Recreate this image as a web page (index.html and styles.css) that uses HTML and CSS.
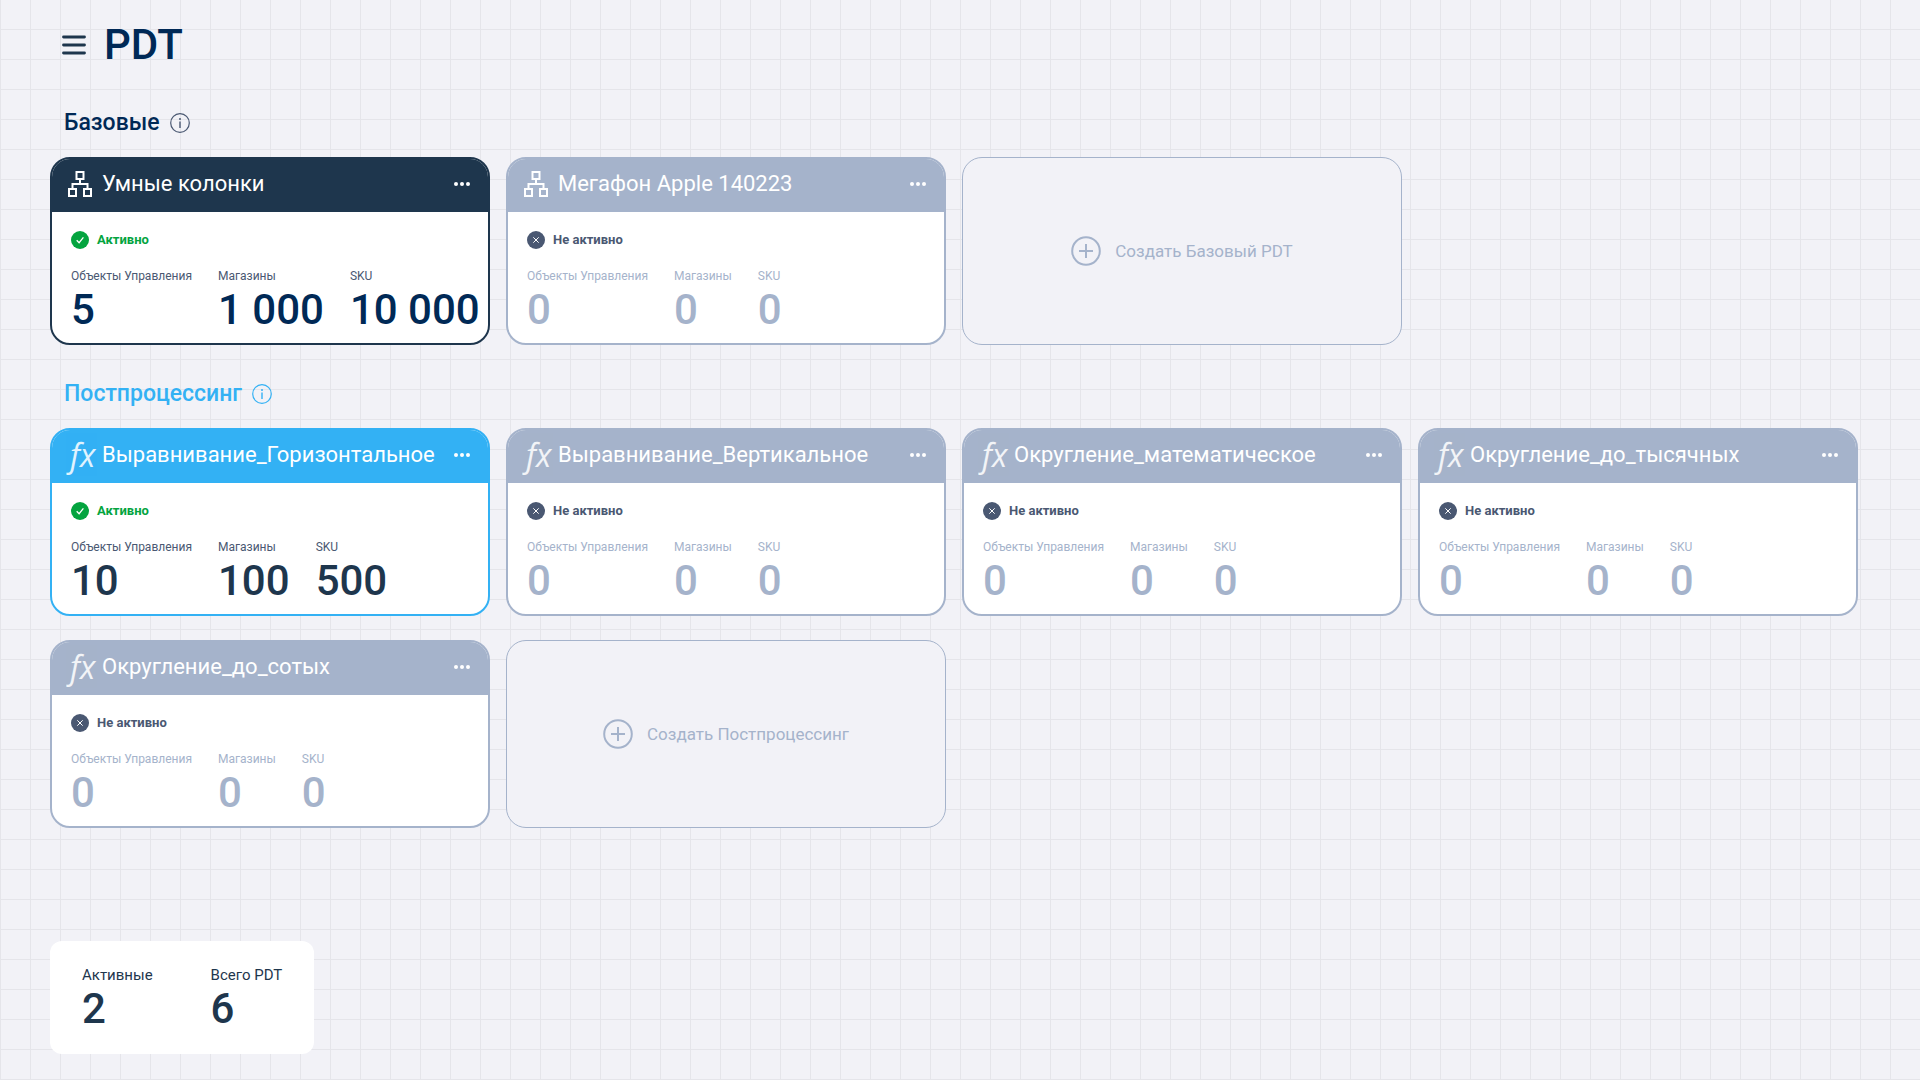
FILE: index.html
```html
<!DOCTYPE html>
<html lang="ru">
<head>
  <meta charset="UTF-8">
  <meta name="viewport" content="width=device-width, initial-scale=1.0">
  <title>PDT</title>
  <link rel="stylesheet" href="styles.css">
</head>
<body>

  <!-- Набор иконок -->
  <svg class="sprite" xmlns="http://www.w3.org/2000/svg" aria-hidden="true">
    <symbol id="icon-info" viewBox="0 0 20 20">
      <circle cx="10" cy="10" r="9.3" fill="none" stroke="currentColor" stroke-width="1.2"/>
      <circle cx="10" cy="6" r="1" fill="currentColor"/>
      <path d="M10 8.6v6.4" stroke="currentColor" stroke-width="1.4"/>
    </symbol>
    <symbol id="icon-tree" viewBox="0 0 25 26">
      <path d="M8.5 1h7v7h-7zM1 18h7v7H1zM16 18h7v7h-7zM12 8v5M4.500 18v-5h15v5" fill="none" stroke="currentColor" stroke-width="2"/>
    </symbol>
    <symbol id="icon-dots" viewBox="0 0 16 4">
      <circle cx="2" cy="2" r="2"/><circle cx="8" cy="2" r="2"/><circle cx="14" cy="2" r="2"/>
    </symbol>
    <symbol id="icon-on" viewBox="0 0 18 18">
      <circle cx="9" cy="9" r="9" fill="#04a43f"/>
      <path d="M5.700 9.200l2.400 2.500 4.300-5.300" fill="none" stroke="#fff" stroke-width="1.300"/>
    </symbol>
    <symbol id="icon-off" viewBox="0 0 18 18">
      <circle cx="9" cy="9" r="9" fill="#4a5872"/>
      <path d="M6.300 6.300l5.400 5.400M11.700 6.300l-5.400 5.400" stroke="#fff" stroke-width="1"/>
    </symbol>
    <symbol id="icon-plus" viewBox="0 0 30 30">
      <circle cx="15" cy="15" r="13.800" fill="none" stroke="currentColor" stroke-width="2"/>
      <path d="M15 8v14M8 15h14" stroke="currentColor" stroke-width="2"/>
    </symbol>
  </svg>

  <header class="header">
    <button class="burger" type="button" aria-label="Меню">
      <svg width="24" height="20" viewBox="0 0 24 20">
        <path d="M1.500 2h21M1.500 10h21M1.500 18h21" stroke="#1e364d" stroke-width="2.800" stroke-linecap="round"/>
      </svg>
    </button>
    <h1 class="logo">PDT</h1>
  </header>

  <main class="main">

    <!-- Базовые -->
    <section class="section">
      <div class="section-head">
        <h2>Базовые</h2>
        <button class="info" type="button" aria-label="О базовых PDT"><svg width="20" height="20"><use href="#icon-info"/></svg></button>
      </div>
      <div class="cards">
        <article class="card card-base">
          <div class="card-head">
            <svg class="card-icon" width="25" height="26"><use href="#icon-tree"/></svg>
            <h3>Умные колонки</h3>
            <button class="more" type="button" aria-label="Действия"><svg width="16" height="4"><use href="#icon-dots"/></svg></button>
          </div>
          <div class="card-body">
            <p class="status status-on"><svg width="18" height="18"><use href="#icon-on"/></svg>Активно</p>
            <dl class="stats">
              <div><dt>Объекты Управления</dt><dd>5</dd></div>
              <div><dt>Магазины</dt><dd>1 000</dd></div>
              <div><dt>SKU</dt><dd>10 000</dd></div>
            </dl>
          </div>
        </article>

        <article class="card card-off">
          <div class="card-head">
            <svg class="card-icon" width="25" height="26"><use href="#icon-tree"/></svg>
            <h3>Мегафон Apple 140223</h3>
            <button class="more" type="button" aria-label="Действия"><svg width="16" height="4"><use href="#icon-dots"/></svg></button>
          </div>
          <div class="card-body">
            <p class="status"><svg width="18" height="18"><use href="#icon-off"/></svg>Не активно</p>
            <dl class="stats">
              <div><dt>Объекты Управления</dt><dd>0</dd></div>
              <div><dt>Магазины</dt><dd>0</dd></div>
              <div><dt>SKU</dt><dd>0</dd></div>
            </dl>
          </div>
        </article>

        <button class="create" type="button">
          <svg width="30" height="30"><use href="#icon-plus"/></svg>
          Создать Базовый PDT
        </button>
      </div>
    </section>

    <!-- Постпроцессинг -->
    <section class="section">
      <div class="section-head section-head-post">
        <h2>Постпроцессинг</h2>
        <button class="info" type="button" aria-label="О постпроцессинге"><svg width="20" height="20"><use href="#icon-info"/></svg></button>
      </div>
      <div class="cards">
        <article class="card card-post">
          <div class="card-head">
            <span class="card-icon fx">fx</span>
            <h3>Выравнивание_Горизонтальное</h3>
            <button class="more" type="button" aria-label="Действия"><svg width="16" height="4"><use href="#icon-dots"/></svg></button>
          </div>
          <div class="card-body">
            <p class="status status-on"><svg width="18" height="18"><use href="#icon-on"/></svg>Активно</p>
            <dl class="stats">
              <div><dt>Объекты Управления</dt><dd>10</dd></div>
              <div><dt>Магазины</dt><dd>100</dd></div>
              <div><dt>SKU</dt><dd>500</dd></div>
            </dl>
          </div>
        </article>

        <article class="card card-off">
          <div class="card-head">
            <span class="card-icon fx">fx</span>
            <h3>Выравнивание_Вертикальное</h3>
            <button class="more" type="button" aria-label="Действия"><svg width="16" height="4"><use href="#icon-dots"/></svg></button>
          </div>
          <div class="card-body">
            <p class="status"><svg width="18" height="18"><use href="#icon-off"/></svg>Не активно</p>
            <dl class="stats">
              <div><dt>Объекты Управления</dt><dd>0</dd></div>
              <div><dt>Магазины</dt><dd>0</dd></div>
              <div><dt>SKU</dt><dd>0</dd></div>
            </dl>
          </div>
        </article>

        <article class="card card-off">
          <div class="card-head">
            <span class="card-icon fx">fx</span>
            <h3>Округление_математическое</h3>
            <button class="more" type="button" aria-label="Действия"><svg width="16" height="4"><use href="#icon-dots"/></svg></button>
          </div>
          <div class="card-body">
            <p class="status"><svg width="18" height="18"><use href="#icon-off"/></svg>Не активно</p>
            <dl class="stats">
              <div><dt>Объекты Управления</dt><dd>0</dd></div>
              <div><dt>Магазины</dt><dd>0</dd></div>
              <div><dt>SKU</dt><dd>0</dd></div>
            </dl>
          </div>
        </article>

        <article class="card card-off">
          <div class="card-head">
            <span class="card-icon fx">fx</span>
            <h3>Округление_до_тысячных</h3>
            <button class="more" type="button" aria-label="Действия"><svg width="16" height="4"><use href="#icon-dots"/></svg></button>
          </div>
          <div class="card-body">
            <p class="status"><svg width="18" height="18"><use href="#icon-off"/></svg>Не активно</p>
            <dl class="stats">
              <div><dt>Объекты Управления</dt><dd>0</dd></div>
              <div><dt>Магазины</dt><dd>0</dd></div>
              <div><dt>SKU</dt><dd>0</dd></div>
            </dl>
          </div>
        </article>

        <article class="card card-off">
          <div class="card-head">
            <span class="card-icon fx">fx</span>
            <h3>Округление_до_сотых</h3>
            <button class="more" type="button" aria-label="Действия"><svg width="16" height="4"><use href="#icon-dots"/></svg></button>
          </div>
          <div class="card-body">
            <p class="status"><svg width="18" height="18"><use href="#icon-off"/></svg>Не активно</p>
            <dl class="stats">
              <div><dt>Объекты Управления</dt><dd>0</dd></div>
              <div><dt>Магазины</dt><dd>0</dd></div>
              <div><dt>SKU</dt><dd>0</dd></div>
            </dl>
          </div>
        </article>

        <button class="create" type="button">
          <svg width="30" height="30"><use href="#icon-plus"/></svg>
          Создать Постпроцессинг
        </button>
      </div>
    </section>
  </main>

  <!-- Итоги -->
  <footer class="footer">
    <dl class="summary">
      <div><dt>Активные</dt><dd>2</dd></div>
      <div><dt>Всего PDT</dt><dd>6</dd></div>
    </dl>
  </footer>

</body>
</html>
```
FILE: styles.css
```css
* {
  box-sizing: border-box;
}

body {
  margin: 0;
  min-height: 100vh;
  padding: 16px 62px 26px 50px;
  display: flex;
  flex-direction: column;
  font-family: Roboto, "Liberation Sans", sans-serif;
  color: #1e364d;
  background-color: #f2f2f7;
  /* Сетка 30x30 */
  background-image:
    linear-gradient(to right, #e5e5ea 1px, transparent 1px),
    linear-gradient(to top, #e5e5ea 1px, transparent 1px);
  background-size: 30px 30px;
}

h1, h2, h3, p, dl, dd {
  margin: 0;
}

button {
  padding: 0;
  border: none;
  background: none;
  font-family: inherit;
  color: inherit;
  cursor: pointer;
}

svg {
  display: block;
  flex-shrink: 0;
}

.sprite {
  position: absolute;
  width: 0;
  height: 0;
}

/* Шапка */
.header {
  display: flex;
  align-items: center;
  gap: 18px;
  height: 58px;
  padding-left: 12px;
}

.logo {
  font-size: 42px;
  line-height: 56px;
  font-weight: 500;
  color: #002956;
}

/* Разделы */
.section-head {
  display: flex;
  align-items: center;
  gap: 10px;
  height: 83px;
  padding: 14px 0 0 14px;
  color: #002956;
}

.section-head h2 {
  font-size: 23px;
  line-height: 32px;
  font-weight: 500;
}

.info {
  color: #4a5872;
}

.section-head-post,
.section-head-post .info {
  color: #33b1f4;
}

.cards {
  display: grid;
  grid-template-columns: repeat(4, 1fr);
  gap: 24px 16px;
}

/* Карточка */
.card {
  min-height: 188px;
  border: 2px solid #a5b3cb;
  border-radius: 20px;
  background-color: #fff;
  overflow: hidden;
}

.card-head {
  display: flex;
  align-items: center;
  height: 53px;
  padding: 0 18px 3px 16px;
  background-color: #a5b3cb;
  color: #fff;
}

.card-head h3 {
  flex: 1;
  font-size: 22px;
  line-height: 28px;
  font-weight: 400;
}

.card-icon {
  width: 25px;
  margin-right: 9px;
}

.fx {
  padding-left: 2px;
  font-family: "Open Sans", "Noto Sans", sans-serif;
  font-size: 32px;
  line-height: 40px;
  font-style: italic;
  opacity: 0.85;
}

.more {
  fill: currentColor;
}

.card-base {
  border-color: #1e364d;
}

.card-base .card-head {
  background-color: #1e364d;
}

.card-post {
  border-color: #33b1f4;
}

.card-post .card-head {
  background-color: #33b1f4;
}

.card-body {
  padding: 18px 0 0 19px;
}

.status {
  display: flex;
  align-items: center;
  gap: 8px;
  font-size: 13px;
  line-height: 20px;
  font-weight: 700;
  color: #4a5872;
}

.status-on {
  color: #04a43f;
}

.stats {
  display: flex;
  gap: 26px;
  margin-top: 18px;
  white-space: nowrap;
}

.stats dt {
  margin-bottom: 2px;
  font-size: 12px;
  line-height: 16px;
  color: #4a5872;
}

.stats dd,
.summary dd {
  font-size: 42px;
  line-height: 48px;
  font-weight: 500;
}

.card-base dd {
  color: #002956;
}

.card-off dt,
.card-off dd {
  color: #a5b3cb;
}

/* Кнопка создания */
.create {
  display: flex;
  align-items: center;
  justify-content: center;
  gap: 14px;
  min-height: 188px;
  border: 1px solid #a5b3cb;
  border-radius: 20px;
  background-color: #f2f2f7;
  font-size: 17px;
  line-height: 24px;
  color: #a5b3cb;
}

/* Итоги внизу страницы */
.footer {
  display: flex;
  margin-top: auto;
  padding-top: 24px;
}

.summary {
  display: flex;
  gap: 58px;
  padding: 24px 32px 21px;
  border-radius: 12px;
  background-color: #fff;
}

.summary dt {
  font-size: 15px;
  line-height: 20px;
}

/* Узкие экраны */
@media (max-width: 1700px) {
  .cards {
    grid-template-columns: repeat(auto-fill, minmax(430px, 1fr));
  }
}
```
